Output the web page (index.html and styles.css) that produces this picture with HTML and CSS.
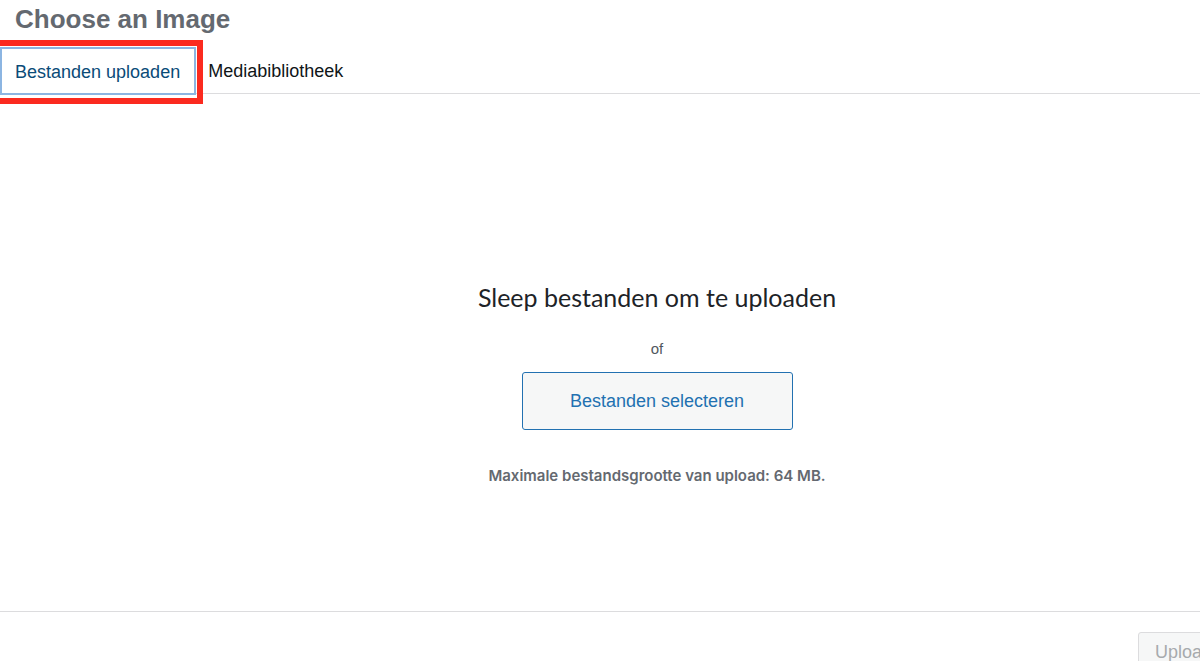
FILE: index.html
```html
<!DOCTYPE html>
<html lang="nl">
<head>
<meta charset="utf-8">
<title>Choose an Image</title>
<link rel="stylesheet" href="styles.css">
</head>
<body>
<div class="modal">
  <h1 class="title">Choose an Image</h1>
  <div class="router">
    <button class="tab tab-active">Bestanden uploaden</button>
    <button class="tab">Mediabibliotheek</button>
    <div class="highlight"></div>
  </div>
  <div class="uploader">
    <h2 class="drop-title">Sleep bestanden om te uploaden</h2>
    <p class="or">of</p>
    <button class="select-btn">Bestanden selecteren</button>
    <p class="max-size">Maximale bestandsgrootte van upload: 64 MB.</p>
  </div>
  <div class="toolbar">
    <button class="upload-btn" disabled>Uploaden</button>
  </div>
</div>
</body>
</html>
```
FILE: styles.css
```css
html, body {
  margin: 0;
  padding: 0;
  background: #ffffff;
}
body {
  font-family: "Liberation Sans", Arial, sans-serif;
  overflow: hidden;
}
.modal {
  width: 1200px;
  height: 661px;
  display: flex;
  flex-direction: column;
  overflow: hidden;
}
.title {
  margin: 0;
  padding: 0 0 0 15px;
  font-size: 26px;
  font-weight: bold;
  line-height: 38px;
  height: 40px;
  flex: none;
  color: #646970;
}
.router {
  position: relative;
  flex: none;
  display: flex;
  align-items: flex-start;
  height: 46px;
  padding-top: 7px;
  box-sizing: content-box;
  border-bottom: 1px solid #dcdcde;
}
.tab {
  box-sizing: border-box;
  flex: none;
  height: 48px;
  padding: 0 11px;
  border: 1px solid transparent;
  background: transparent;
  font-family: "Liberation Sans", Arial, sans-serif;
  font-size: 18px;
  color: #101517;
  line-height: 46px;
  cursor: pointer;
}
.tab-active {
  position: relative;
  z-index: 1;
  color: #0a4b78;
  border: 2px solid #8cb5e2;
  padding: 0 14px 0 13px;
  background: #ffffff;
}
.highlight {
  position: absolute;
  z-index: 2;
  left: -6px;
  top: 0;
  width: 197px;
  height: 52px;
  border: 6px solid #fb2a1f;
  pointer-events: none;
}
.uploader {
  flex: 1;
  display: flex;
  flex-direction: column;
  align-items: center;
  padding-top: 188px;
  padding-left: 114px;
  border-bottom: 1px solid #dcdcde;
}
.drop-title {
  margin: 0;
  font-family: Lato, "Liberation Sans", sans-serif;
  font-weight: normal;
  font-size: 25px;
  line-height: 30px;
  color: #1d2327;
}
.or {
  margin: 27px 0 0;
  font-size: 15px;
  line-height: 20px;
  color: #50575e;
}
.select-btn {
  margin-top: 13px;
  width: 271px;
  height: 58px;
  border: 1px solid #2271b1;
  border-radius: 3px;
  background: #f6f7f7;
  color: #2271b1;
  font-family: "Liberation Sans", Arial, sans-serif;
  font-size: 18px;
  cursor: pointer;
}
.max-size {
  margin: 36px 0 0;
  font-family: Inter, "Liberation Sans", sans-serif;
  font-size: 15px;
  font-weight: 600;
  line-height: 20px;
  color: #646970;
}
.toolbar {
  flex: none;
  height: 49px;
  display: flex;
  justify-content: flex-start;
  align-items: flex-start;
  padding-top: 20px;
  box-sizing: border-box;
}
.upload-btn {
  margin-left: 1138px;
  flex: none;
  width: 110px;
  height: 40px;
  border: 1px solid #dcdcde;
  border-radius: 3px;
  background: #f6f7f7;
  color: #a7aaad;
  font-family: "Liberation Sans", Arial, sans-serif;
  font-size: 18px;
  text-align: left;
  padding: 0 16px;
}
```
